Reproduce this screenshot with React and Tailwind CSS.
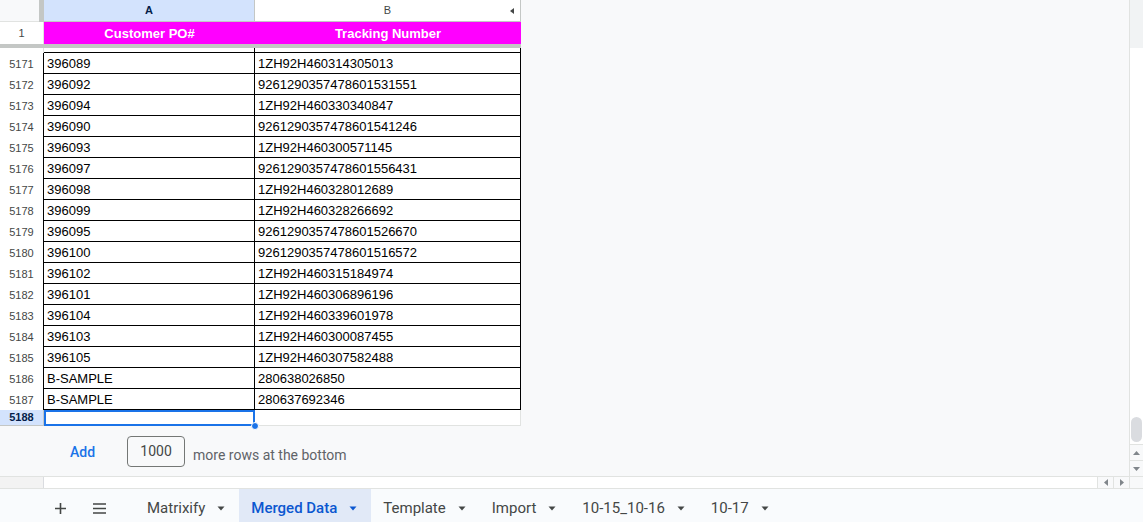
import React from 'react';

const rows = [
    [5171, '396089', '1ZH92H460314305013'],
    [5172, '396092', '9261290357478601531551'],
    [5173, '396094', '1ZH92H460330340847'],
    [5174, '396090', '9261290357478601541246'],
    [5175, '396093', '1ZH92H460300571145'],
    [5176, '396097', '9261290357478601556431'],
    [5177, '396098', '1ZH92H460328012689'],
    [5178, '396099', '1ZH92H460328266692'],
    [5179, '396095', '9261290357478601526670'],
    [5180, '396100', '9261290357478601516572'],
    [5181, '396102', '1ZH92H460315184974'],
    [5182, '396101', '1ZH92H460306896196'],
    [5183, '396104', '1ZH92H460339601978'],
    [5184, '396103', '1ZH92H460300087455'],
    [5185, '396105', '1ZH92H460307582488'],
    [5186, 'B-SAMPLE', '280638026850'],
    [5187, 'B-SAMPLE', '280637692346'],
];

const tabs = [
    { name: 'Matrixify' },
    { name: 'Merged Data', active: true },
    { name: 'Template' },
    { name: 'Import' },
    { name: '10-15_10-16' },
    { name: '10-17' },
];

function Caret({ color }) {
    return (
        <svg width="8" height="5" viewBox="0 0 8 5" className="shrink-0">
            <path d="M0.5 0.5 L7.5 0.5 L4 4.5 Z" fill={color} />
        </svg>
    );
}

export default function App() {
    return (
        <div className="w-[1143px] h-[522px] overflow-hidden flex flex-col bg-[#f8f9fa] font-['Liberation_Sans',Arial,sans-serif]">
            <div className="flex h-[476px]">
                <div className="flex-1 flex flex-col">
                    {/* column headers */}
                    <div className="flex h-[22px]">
                        <div className="w-[39px] bg-[#f8f9fa] border-b border-[#e1e3e1]" />
                        <div className="w-[5px] bg-[#c4c7c5]" />
                        <div className="w-[211px] bg-[#d3e3fd] border-r border-b border-[#c4c7c5] flex items-center justify-center text-[11px] font-bold text-[#041e49]">A</div>
                        <div className="w-[266px] bg-white border-r border-b border-[#c4c7c5] relative flex items-center justify-center text-[11px] text-[#444746]">
                            B
                            <svg width="4" height="6" viewBox="0 0 4 6" className="absolute right-[6px] top-[8px]">
                                <path d="M4 0 L4 6 L0 3 Z" fill="#444746" />
                            </svg>
                        </div>
                    </div>

                    {/* frozen header row */}
                    <div className="flex h-[22px]">
                        <div className="w-[44px] bg-white border-r border-[#e1e3e1] flex items-center justify-center text-[11px] text-[#444746]">1</div>
                        <div className="w-[211px] bg-[#ff00ff] flex items-center justify-center pt-[1px] text-[13px] font-bold text-white">Customer PO#</div>
                        <div className="w-[266px] bg-[#ff00ff] flex items-center justify-center pt-[1px] text-[13px] font-bold text-white">Tracking Number</div>
                    </div>
                    <div className="w-[521px] h-[4px] bg-[#c4c7c5]" />

                    {/* partially scrolled row */}
                    <div className="flex h-[5px]">
                        <div className="w-[44px] bg-white border-r border-[#e1e3e1]" />
                        <div className="w-[211px] bg-white border-r border-b border-black" />
                        <div className="w-[266px] bg-white border-r border-b border-black" />
                    </div>

                    {rows.map(([n, po, tr]) => (
                        <div key={n} className="flex h-[21px]">
                            <div className="w-[44px] bg-white border-r border-black flex items-center justify-center pt-[1px] text-[11px] text-[#444746]">{n}</div>
                            <div className="w-[211px] bg-white border-r border-b border-black flex items-center pl-[3px] pt-[2px] text-[13px] text-black">{po}</div>
                            <div className="w-[266px] bg-white border-r border-b border-black flex items-center pl-[3px] pt-[2px] text-[13px] text-black">{tr}</div>
                        </div>
                    ))}

                    {/* selected empty row */}
                    <div className="flex h-[16px] relative">
                        <div className="w-[44px] bg-[#d3e3fd] border-r border-b border-[#c4c7c5] flex items-center justify-center text-[11px] font-bold text-[#041e49]">5188</div>
                        <div className="w-[211px] bg-white border-2 border-[#1a73e8]" />
                        <div className="w-[266px] bg-white border-r border-b border-[#e1e3e1]" />
                        <div className="absolute left-[251px] top-[12px] w-[8px] h-[8px] rounded-full bg-[#1a73e8] border border-white" />
                    </div>

                    {/* add rows */}
                    <div className="flex items-center h-[50px] font-['Roboto',sans-serif] text-[14px]">
                        <span className="ml-[70px] mt-[2px] text-[#1a73e8] font-medium">Add</span>
                        <div className="ml-[32px] w-[58px] h-[31px] border border-[#747775] rounded-[4px] flex items-center justify-center text-[#444746]">1000</div>
                        <span className="ml-[8px] mt-[8px] text-[#5f6368]">more rows at the bottom</span>
                    </div>
                </div>

                {/* vertical scrollbar */}
                <div className="w-[14px] border-l border-[#e1e3e1] flex flex-col">
                    <div className="h-[48px] bg-[#f1f3f4]" />
                    <div className="flex-1 bg-white flex flex-col">
                        <div className="flex-1" />
                        <div className="h-[25px] mx-[1px] rounded-full bg-[#dadce0]" />
                        <div className="h-[2px]" />
                        <div className="h-[16px] border-t border-[#e1e3e1] bg-[#f8f9fa] flex items-center justify-center">
                            <svg width="7" height="4" viewBox="0 0 7 4"><path d="M0 4 L7 4 L3.5 0 Z" fill="#80868b" /></svg>
                        </div>
                        <div className="h-[16px] border-t border-[#e1e3e1] bg-[#f8f9fa] flex items-center justify-center">
                            <svg width="7" height="4" viewBox="0 0 7 4"><path d="M0 0 L7 0 L3.5 4 Z" fill="#80868b" /></svg>
                        </div>
                    </div>
                </div>
            </div>

            {/* horizontal scrollbar */}
            <div className="flex h-[13px] border-t border-b border-[#e1e3e1]">
                <div className="w-[44px] bg-[#f3f3f3] border-r border-[#dadce0]" />
                <div className="flex-1 bg-white" />
                <div className="w-[16px] border-l border-[#e1e3e1] bg-[#f8f9fa] flex items-center justify-center">
                    <svg width="4" height="7" viewBox="0 0 4 7"><path d="M4 0 L4 7 L0 3.5 Z" fill="#80868b" /></svg>
                </div>
                <div className="w-[16px] border-l border-[#e1e3e1] bg-[#f8f9fa] flex items-center justify-center">
                    <svg width="4" height="7" viewBox="0 0 4 7"><path d="M0 0 L0 7 L4 3.5 Z" fill="#80868b" /></svg>
                </div>
                <div className="w-[14px] border-l border-[#e1e3e1] bg-[#f8f9fa]" />
            </div>

            {/* sheet tabs */}
            <div className="flex-1 flex items-stretch bg-[#f9fbfd] font-['Roboto',sans-serif] text-[15px]">
                <div className="ml-[55px] pt-[6px] flex items-center">
                    <svg width="11" height="11" viewBox="0 0 11 11">
                        <path d="M5.5 0 V11 M0 5.5 H11" stroke="#444746" strokeWidth="1.6" />
                    </svg>
                </div>
                <div className="ml-[27px] pt-[6px] flex items-center">
                    <svg width="13" height="11" viewBox="0 0 13 11">
                        <path d="M0 1 H13 M0 5.5 H13 M0 10 H13" stroke="#444746" strokeWidth="1.6" />
                    </svg>
                </div>
                <div className="ml-[29px] flex items-stretch">
                    {tabs.map((t) => (
                        <div
                            key={t.name}
                            className={`flex items-center gap-[12px] pl-[12px] pr-[14px] pt-[6px] ${t.active ? 'bg-[#e1e9f7] text-[#0b57d0] font-medium' : 'text-[#444746]'}`}
                        >
                            <span>{t.name}</span>
                            <Caret color={t.active ? '#0b57d0' : '#444746'} />
                        </div>
                    ))}
                </div>
            </div>
        </div>
    );
}
